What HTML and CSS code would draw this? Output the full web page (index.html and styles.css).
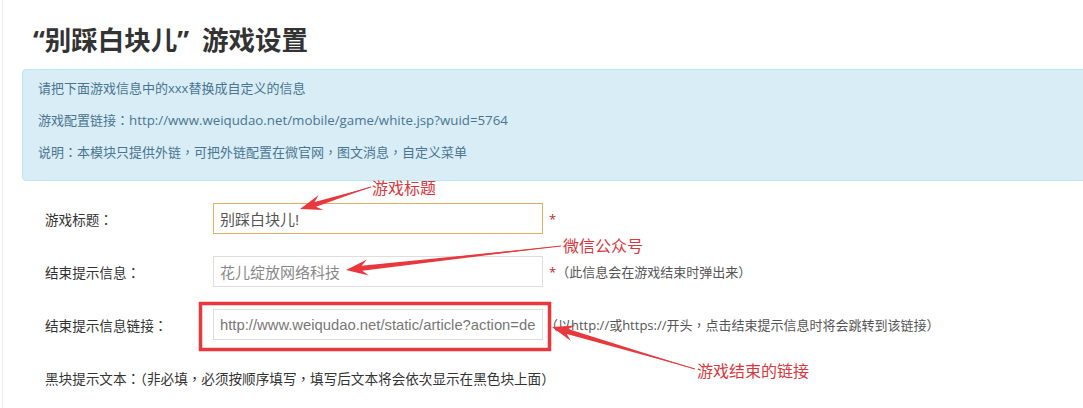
FILE: index.html
```html
<!DOCTYPE html>
<html lang="zh-CN">
<head>
  <meta charset="UTF-8" />
  <title>游戏设置</title>
  <link rel="stylesheet" href="styles.css">
</head>
<body>
  <div class="page">
    <h1 class="title">“别踩白块儿” 游戏设置</h1>

    <div class="alert">
      <p>请把下面游戏信息中的xxx替换成自定义的信息</p>
      <p>游戏配置链接：<span class="link">http://www.weiqudao.net/mobile/game/white.jsp?wuid=5764</span></p>
      <p>说明：本模块只提供外链，可把外链配置在微官网，图文消息，自定义菜单</p>
    </div>

    <div class="form">
      <div class="row">
        <label class="label">游戏标题：</label>
        <input class="field focus" type="text" value="别踩白块儿!">
        <span class="req">*</span>
      </div>
      <div class="row">
        <label class="label">结束提示信息：</label>
        <input class="field soft" type="text" value="花儿绽放网络科技">
        <span class="req">*</span><span class="hint">（此信息会在游戏结束时弹出来）</span>
      </div>
      <div class="row">
        <label class="label">结束提示信息链接：</label>
        <input class="field url" type="text" value="http://www.weiqudao.net/static/article?action=de">
        <span class="hint">（以http://或https://开头，点击结束提示信息时将会跳转到该链接）</span>
      </div>
      <div class="row text-row">
        <span class="label">黑块提示文本：（非必填，必须按顺序填写，填写后文本将会依次显示在黑色块上面）</span>
      </div>
    </div>

    <!-- annotations drawn over the screenshot -->
    <svg class="marks" width="1083" height="408" viewBox="0 0 1083 408">
      <g fill="#e8383d" stroke="#e8383d">
        <line x1="371" y1="187" x2="305" y2="207" stroke-width="1.2"/>
        <polygon stroke="none" points="371,187 314.6,201.9 318.7,194.9 300,209 323.4,210.1 316,206.7"/>
        <line x1="561" y1="246" x2="350" y2="269" stroke-width="1.2"/>
        <polygon stroke="none" points="561,246 361.6,265.7 367,259.6 346,270 368.8,275.5 362.2,270.7"/>
        <line x1="695" y1="369" x2="556" y2="328" stroke-width="1.2"/>
        <polygon stroke="none" points="695,369 568.1,329.1 575.4,325.5 552,327 570.9,340.9 566.7,333.9"/>
      </g>
      <rect x="200.5" y="303.5" width="349" height="46" fill="none" stroke="#e8383d" stroke-width="3.5"/>
    </svg>
    <span class="note note-title">游戏标题</span>
    <span class="note note-wx">微信公众号</span>
    <span class="note note-link">游戏结束的链接</span>
  </div>
</body>
</html>
```

FILE: styles.css
```css
* {
  margin: 0;
  padding: 0;
  box-sizing: border-box;
}

html, body {
  width: 100%;
  height: 100%;
  overflow: hidden;
  background: #fff;
}

body {
  font-family: "Open Sans", "Noto Sans CJK TC", sans-serif;
  font-feature-settings: "locl" 0;
  color: #333;
}

.page {
  position: relative;
  margin-left: 2px;
  height: 100%;
  padding-top: 22px;
  border-left: 1px solid #ececec;
}

.title {
  margin: 0 0 11px 30px;
  font-size: 26.5px;
  line-height: 36px;
  font-weight: bold;
  word-spacing: 6px;
  color: #333;
  font-family: "Open Sans", "Noto Sans CJK SC", sans-serif;
  font-feature-settings: normal;
}

.alert {
  margin: 0 -20px 0 19px;
  height: 112px;
  padding: 8px 15px 0 15px;
  background: #d9edf7;
  border: 1px solid #bce8f1;
  border-radius: 4px;
  color: #4a7590;
  font-size: 13px;
  line-height: 20px;
}

.alert p {
  margin-bottom: 12px;
}

.alert .link {
  font-size: 13.3px;
}

.form {
  margin-top: 22px;
  padding-left: 42px;
  display: flex;
  flex-direction: column;
  gap: 22px;
}

.row {
  display: flex;
  align-items: center;
  height: 31px;
}

.label {
  width: 168px;
  font-size: 13.6px;
  color: #333;
  white-space: nowrap;
}

.text-row .label {
  width: auto;
}

.field {
  width: 330px;
  height: 31px;
  padding: 0 6px;
  border: 1px solid #ddd;
  background: #fff;
  font-family: "Liberation Sans", "Noto Sans CJK TC", sans-serif;
  font-size: 15px;
  color: #555;
  outline: none;
}

.field.focus {
  border-color: #e3ad66;
}

.field.soft {
  color: #888;
}

.field.url {
  font-size: 14.8px;
  color: #777;
}

.req {
  margin-left: 6px;
  color: #c0272d;
  font-size: 13px;
}

.hint {
  font-size: 13px;
  color: #555;
}

.url + .hint {
  margin-left: 2px;
}

.marks {
  position: absolute;
  top: 0;
  left: -3px;
  pointer-events: none;
}

.note {
  position: absolute;
  font-family: "Noto Sans CJK SC", sans-serif;
  font-feature-settings: normal;
  font-size: 16px;
  line-height: 22px;
  color: #d9363e;
  white-space: nowrap;
}

.note-title {
  left: 369px;
  top: 176px;
}

.note-wx {
  left: 560px;
  top: 234px;
}

.note-link {
  left: 694px;
  top: 359px;
}
```
